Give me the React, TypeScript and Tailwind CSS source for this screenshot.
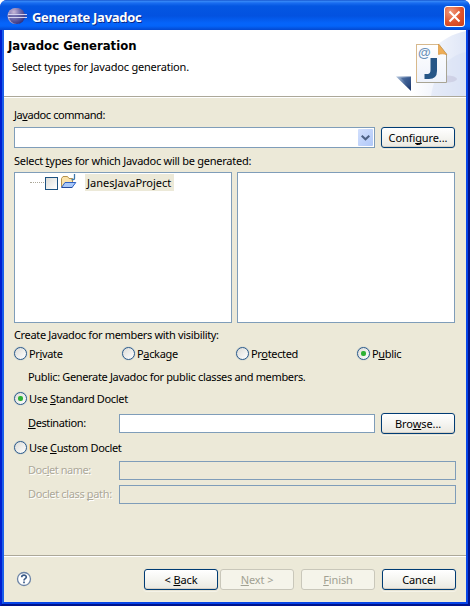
import React from "react";

function Label({ children, className = "tracking-[-0.34px]" }: { children: React.ReactNode; className?: string }) {
  return <span className={"block h-[13px] leading-[11px] whitespace-pre " + className}>{children}</span>;
}

function U({ children }: { children: React.ReactNode }) {
  return <span className="underline decoration-1 underline-offset-[1px] [text-decoration-skip-ink:none]">{children}</span>;
}

function Radio({ checked, children, className = "" }: { checked?: boolean; children: React.ReactNode; className?: string }) {
  return (
    <div className={"flex h-[14px] items-start " + className}>
      <span className="flex size-[13px] shrink-0 items-center justify-center rounded-full border border-[#2b5b8c] bg-linear-to-br from-[#dcdcd7] to-white shadow-[0_0_1px_#6b8cae]">
        {checked && <span className="size-[5px] rounded-[2px] bg-[#2eb135]" />}
      </span>
      <Label className="mt-px ml-[2px] tracking-[-0.34px]">{children}</Label>
    </div>
  );
}

function Button({ disabled, children, className = "" }: { disabled?: boolean; children: React.ReactNode; className?: string }) {
  return (
    <button
      className={
        "flex h-[21px] w-[74px] shrink-0 items-center justify-center rounded-[3px] border tracking-[-0.1px] whitespace-pre " +
        (disabled
          ? "border-[#c9c7ba] bg-[#f5f4ea] text-[#a1a192] "
          : "border-[#003c74] bg-linear-to-b from-white via-[#f5f5f1] to-[#eae8e0] shadow-[0_0_0_1px_#e6e3d4,0_1px_0_1px_#f5f3e8,inset_0_-1px_0_#d6d0c5] ") +
        className
      }
    >
      {children}
    </button>
  );
}

function EclipseIcon() {
  return (
    <svg width="20" height="16" viewBox="0 0 20 16">
      <defs>
        <radialGradient id="ecl" cx="0.3" cy="0.25" r="0.85">
          <stop offset="0" stopColor="#c9b8d8" />
          <stop offset="0.45" stopColor="#7570b0" />
          <stop offset="1" stopColor="#2c2b78" />
        </radialGradient>
      </defs>
      <circle cx="8.500" cy="8" r="8" fill="#a99ac4" />
      <circle cx="10" cy="8" r="8" fill="url(#ecl)" />
      <path d="M1 6.500H20M1 9.500H20" stroke="#d4d2f0" />
      <path d="M1 8H20" stroke="#51509a" />
    </svg>
  );
}

function JavadocBanner() {
  return (
    <svg width="76" height="66" viewBox="390 30 76 66" className="shrink-0">
      <defs>
        <linearGradient id="arc" x1="0" y1="0" x2="1" y2="0">
          <stop offset="0" stopColor="#fff" />
          <stop offset="1" stopColor="#dfe6f7" />
        </linearGradient>
        <linearGradient id="tri" x1="0" y1="0" x2="1" y2="0.7">
          <stop offset="0" stopColor="#b7c8df" />
          <stop offset="0.55" stopColor="#4d6d9e" />
          <stop offset="1" stopColor="#1e3a70" />
        </linearGradient>
        <linearGradient id="page" x1="0" y1="0" x2="0" y2="1">
          <stop offset="0" stopColor="#fff" />
          <stop offset="1" stopColor="#eef2fb" />
        </linearGradient>
      </defs>
      <path d="M466 31C440 36 416 58 412 96H466Z" fill="url(#arc)" />
      <path d="M466 52C448 56 435 70 431 96H466Z" fill="#d3dcf3" opacity="0.4" />
      <ellipse cx="447" cy="79" rx="10" ry="3.500" fill="#b9b3cf" opacity="0.4" />
      <path d="M396 76.500H411V91Z" fill="url(#tri)" />
      <path d="M401 78H410V87Z" fill="#31548c" opacity="0.55" />
      <path d="M416.500 44.500H439L446.500 54V82.500H416.500Z" fill="url(#page)" stroke="#a8a494" />
      <path d="M416.500 82V44.500H438" fill="none" stroke="#d8b98c" />
      <path d="M438.500 44L447 55C444 53.500 441.500 53.500 438.500 54.500Z" fill="#efad55" stroke="#d9963f" strokeWidth="0.7" />
      <text x="418" y="57" fontFamily="Liberation Sans, sans-serif" fontSize="13" fontWeight="bold" fill="#6a91b8">@</text>
      <path d="M430.500 58H437V71Q437 79 429 79H424.500V74H427.500Q430.500 74 430.500 70Z" fill="#265687" />
    </svg>
  );
}

function ProjectIcon() {
  return (
    <svg width="17" height="16" viewBox="0 0 17 16" className="shrink-0">
      <path d="M1.500 13V4.500L3 2.500h4.500l1.500 2h3.500V8" fill="#fbe3ab" stroke="#b5924c" />
      <path d="M1.500 13.500L5 8.500H15.800L12 13.500Z" fill="#a9c8f8" stroke="#2f62c4" />
      <path d="M2 13.500H12.300" stroke="#23499a" />
      <path d="M14.500 0V4.500Q14.500 5.500 13.500 5.500H11.500" fill="none" stroke="#3c78ad" strokeWidth="1.300" />
    </svg>
  );
}

export default function App() {
  return (
    <div className="flex h-[606px] w-[470px] flex-col overflow-hidden rounded-t-[7px] bg-[#0831d9] font-['Noto_Sans','DejaVu_Sans',sans-serif] text-[11px] leading-[13px] text-black">
      <header className="flex h-[30px] shrink-0 items-center bg-[linear-gradient(180deg,#0a43c0_0,#3a8cf8_1px,#1a6df0_3px,#0457e2_6px,#0352e0_16px,#0564fa_23px,#0464fa_26px,#0348d0_30px)] pt-[2px] pr-[5px] pl-[7px]">
        <EclipseIcon />
        <h1 className="mt-[2px] ml-[5px] font-['Open_Sans','Noto_Sans',sans-serif] text-[13px] font-bold tracking-[-0.3px] whitespace-pre text-white [text-shadow:1px_1px_0_#0a2a8a]">Generate Javadoc</h1>
        <button className="ml-auto flex size-[21px] items-center justify-center rounded-[3px] border border-white bg-[radial-gradient(circle_at_30%_25%,#f09a7c,#e0532b_55%,#c8401c)]">
          <svg width="13" height="13" viewBox="0 0 13 13">
            <path d="M1.500 1.500L11.500 11.500M11.500 1.500L1.500 11.500" stroke="#fff" strokeWidth="2" />
          </svg>
        </button>
      </header>

      <div className="flex min-h-0 flex-1 border-r-2 border-b-2 border-l-2 border-[#00138c] border-l-[#001fd0]">
        <div className="flex min-w-0 flex-1 flex-col border-r-2 border-b-2 border-l-2 border-[#0745e8] border-l-[#1a5eea] bg-[#ece9d8]">
          <section className="flex h-[66px] shrink-0 justify-between bg-white">
            <div className="pt-[8px] pl-[4px]">
              <h2 className="h-[16px] font-['DejaVu_Sans_Condensed','DejaVu_Sans',sans-serif] text-[13px] leading-[16px] font-bold whitespace-pre">Javadoc Generation</h2>
              <Label className="mt-[7px] ml-[4px] tracking-[-0.2px]">Select types for Javadoc generation.</Label>
            </div>
            <JavadocBanner />
          </section>
          <div className="h-[2px] shrink-0 border-t border-[#aca899] bg-white" />

          <main className="flex flex-1 flex-col pt-[11px] pl-[10px]">
            <Label className="tracking-[-0.42px]">Ja<U>v</U>adoc command:</Label>
            <div className="mt-[5px] flex gap-[6px]">
              <div className="flex h-[21px] w-[361px] justify-end border border-[#7f9db9] bg-white p-px">
                <span className="flex w-[15px] items-center justify-center rounded-[1px] bg-linear-to-br from-[#d3e0fd] to-[#b0c8f8]">
                  <svg width="9" height="6" viewBox="0 0 9 6">
                    <path d="M0.700 0.700L4.500 4.300L8.300 0.700" fill="none" stroke="#4d6185" strokeWidth="2" />
                  </svg>
                </span>
              </div>
              <Button>Confi<U>g</U>ure...</Button>
            </div>

            <Label className="mt-[7px] tracking-[-0.26px]">Select <U>t</U>ypes for which Javadoc will be generated:</Label>
            <div className="mt-[4px] flex h-[151px] gap-[5px]">
              <div className="flex w-[218px] items-start border border-[#7f9db9] bg-white pt-px pl-[15px]">
                <span className="mt-[8px] w-[14px] border-t border-dotted border-[#aca899]" />
                <span className="mt-[3px] ml-px size-[13px] border border-[#1c5180] bg-linear-to-br from-[#dcdcd7] to-white" />
                <span className="ml-[2px]"><ProjectIcon /></span>
                <span className="ml-[8px] h-[17px] w-[89px] bg-[#ece9d8] pt-[2px] pl-[2px] whitespace-pre">JanesJavaProject</span>
              </div>
              <div className="w-[218px] border border-[#7f9db9] bg-white" />
            </div>

            <Label className="mt-[6px] tracking-[-0.33px]">Create Javadoc for members with visibility:</Label>
            <div className="mt-[5px] flex">
              <Radio className="w-[108px]">Pr<U>i</U>vate</Radio>
              <Radio className="w-[114px]">P<U>a</U>ckage</Radio>
              <Radio className="w-[121px]">Pr<U>o</U>tected</Radio>
              <Radio checked>P<U>u</U>blic</Radio>
            </div>
            <Label className="mt-[10px] ml-[14px] tracking-[-0.34px]">Public: Generate Javadoc for public classes and members.</Label>

            <Radio checked className="mt-[8px]">Use <U>S</U>tandard Doclet</Radio>
            <div className="mt-[7px] flex h-[21px] items-center pl-[14px]">
              <Label className="w-[91px] tracking-[-0.4px]"><U>D</U>estination:</Label>
              <div className="mr-[6px] h-[19px] w-[256px] border border-[#7f9db9] bg-white" />
              <Button>Bro<U>w</U>se...</Button>
            </div>

            <Radio className="mt-[7px]">Use <U>C</U>ustom Doclet</Radio>
            <div className="mt-[6px] flex h-[19px] items-center pl-[14px] text-[#aca899] [text-shadow:1px_1px_0_#fff]">
              <Label className="w-[91px] tracking-[-0.45px]">Doc<U>l</U>et name:</Label>
              <div className="h-[19px] w-[337px] border border-[#7f9db9]" />
            </div>
            <div className="mt-[5px] flex h-[19px] items-center pl-[14px] text-[#aca899] [text-shadow:1px_1px_0_#fff]">
              <Label className="w-[91px] tracking-[-0.36px]">Doclet class <U>p</U>ath:</Label>
              <div className="h-[19px] w-[337px] border border-[#7f9db9]" />
            </div>
          </main>

          <footer className="flex h-[47px] shrink-0 border-t border-[#aca899] pt-[13px] pl-[12px] shadow-[inset_0_1px_#fff]">
            <svg width="16" height="16" viewBox="0 0 16 16" className="mt-[2px]">
              <circle cx="8" cy="8" r="6.500" fill="#fff" stroke="#6c84a6" strokeWidth="1.300" />
              <path d="M5.700 6.300C5.700 3.500 10.300 3.500 10.300 6.200C10.300 7.700 8 7.700 8 9.500M8 10.600V12.300" fill="none" stroke="#3b5b87" strokeWidth="1.700" />
            </svg>
            <Button className="ml-[112px]">{"< "}<U>B</U>ack</Button>
            <Button disabled className="ml-[2px]"><U>N</U>{"ext >"}</Button>
            <Button disabled className="ml-[7px]"><U>F</U>inish</Button>
            <Button className="ml-[7px]">Cancel</Button>
          </footer>
        </div>
      </div>
    </div>
  );
}
